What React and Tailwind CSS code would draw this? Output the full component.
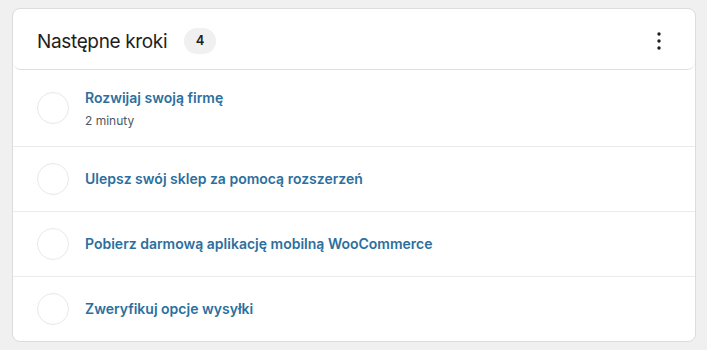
import React from "react";

const items = [
  { title: "Rozwijaj swoją firmę", sub: "2 minuty" },
  { title: "Ulepsz swój sklep za pomocą rozszerzeń" },
  { title: "Pobierz darmową aplikację mobilną WooCommerce" },
  { title: "Zweryfikuj opcje wysyłki" },
];

export default function App() {
  return (
    <div className="w-[707px] h-[350px] bg-[#f0f0f0] pt-2 pl-3" style={{ fontFamily: "Inter, 'Noto Sans', sans-serif" }}>
      <div className="w-[684px] h-[334px] bg-white border border-[#dcdcdc] rounded-lg overflow-hidden flex flex-col">
        <div className="h-[61px] shrink-0 flex items-center pl-6 pr-6 pt-[4px] border-b border-[#e0e0e0] rounded-b-lg">
          <span className="text-[19px] tracking-[-0.35px] text-[#1e1e1e] leading-none">Następne kroki</span>
          <span className="ml-[17px] w-[32px] h-[26px] rounded-full bg-[#f0f0f0] flex items-center justify-center text-[13px] font-semibold text-[#1e1e1e]">4</span>
          <div className="ml-auto w-6 h-6 flex items-center justify-center">
            <svg width="24" height="24" viewBox="0 0 24 24" fill="#1e1e1e">
              <circle cx="12" cy="5" r="1.7" />
              <circle cx="12" cy="12" r="1.7" />
              <circle cx="12" cy="19" r="1.7" />
            </svg>
          </div>
        </div>
        {items.map((it, i) => (
          <div
            key={i}
            className={`flex items-center pl-6 pr-6 ${i === 0 ? "h-[76px]" : "h-[65px] border-t border-[#ebebeb]"}`}
          >
            <div className="w-8 h-8 rounded-full border border-[#e8e8e8] shrink-0" />
            <div className="ml-4 flex flex-col">
              <span className="text-[14px] font-semibold text-[#2c6f9e] leading-5">{it.title}</span>
              {it.sub && <span className="text-[12px] text-[#50575e] mt-[5px] leading-4">{it.sub}</span>}
            </div>
          </div>
        ))}
      </div>
    </div>
  );
}
